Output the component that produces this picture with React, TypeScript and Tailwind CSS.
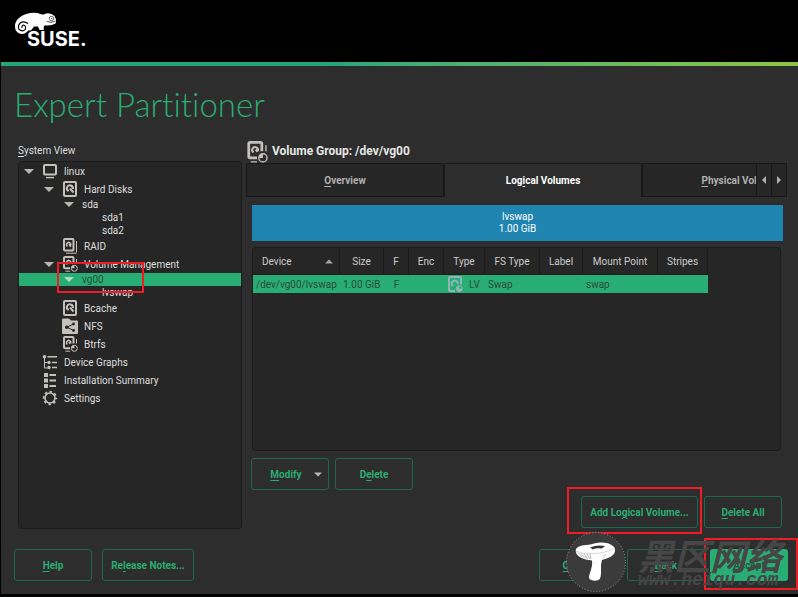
import type { ReactNode } from "react";

type IconProps = { className?: string };

function DiskIcon({ className = "size-4" }: IconProps) {
  return (
    <svg viewBox="0 0 16 16" className={className} fill="none" stroke="currentColor">
      <rect x="2" y="1" width="12" height="14" rx="1" strokeWidth="2" />
      <path d="M6.6 10A3 3 0 1 1 10.800 8" strokeWidth="2" />
      <path d="M8 7.500l3.500 4" strokeWidth="2" />
    </svg>
  );
}

function RaidIcon({ className = "size-4" }: IconProps) {
  return (
    <svg viewBox="0 0 16 16" className={className} fill="none" stroke="currentColor">
      <rect x="2" y="1" width="9.500" height="11.500" rx="1" strokeWidth="2" />
      <path d="M5.500 8.300A2.100 2.100 0 1 1 8.600 7.300M7 6.200l1.800 2.600" strokeWidth="1.500" />
      <path d="M14.500 3v11.500M4 15.200h10.500" strokeWidth="1" />
    </svg>
  );
}

function VolumeIcon({ className = "size-4" }: IconProps) {
  return (
    <svg viewBox="0 0 16 16" className={className} fill="none" stroke="currentColor">
      <path d="M8 12.200H3a1 1 0 0 1-1-1V2a1 1 0 0 1 1-1h7.500a1 1 0 0 1 1 1v5.500" strokeWidth="2" />
      <path d="M5.500 8.300A2.100 2.100 0 1 1 8.600 7.300M7 6.200l1.400 1.600" strokeWidth="1.500" />
      <path d="M14.500 3v4.500M3.500 15.200h4.500" strokeWidth="1" />
      <circle cx="12.300" cy="12.300" r="3" strokeWidth="1" />
      <path d="M12.300 12.300V9.300a3 3 0 0 0-3 3z" fill="currentColor" stroke="none" />
    </svg>
  );
}

function LogicalVolumeIcon() {
  return (
    <svg viewBox="0 0 16 16" className="size-4 text-[#8fb5b8]" fill="none" stroke="currentColor">
      <path d="M8 15H3a1 1 0 0 1-1-1V2a1 1 0 0 1 1-1h10a1 1 0 0 1 1 1v6.500" strokeWidth="2" />
      <path d="M6 10A3 3 0 1 1 10.800 8" strokeWidth="2" />
      <circle cx="12.300" cy="12.500" r="3" strokeWidth="1" />
      <path d="M12.300 12.500v-3a3 3 0 1 0 3 3z" fill="currentColor" stroke="none" />
    </svg>
  );
}

function ComputerIcon() {
  return (
    <svg viewBox="0 0 16 16" className="size-4" fill="none" stroke="currentColor" strokeWidth="2">
      <rect x="2" y="2" width="12" height="9.500" rx="1" />
      <path d="M4 14.600h8" strokeWidth="1.400" />
    </svg>
  );
}

function ShareIcon() {
  return (
    <svg viewBox="0 0 16 16" className="size-4">
      <path d="M0 1.500Q0 .5 1 .5h6l2 2h6q1 0 1 1V15q0 1-1 1H1q-1 0-1-1z" fill="currentColor" />
      <path d="M11.500 6L5 9.200l6.500 3.300" stroke="#262626" fill="none" />
      <g fill="#262626">
        <circle cx="11.500" cy="6" r="1.400" />
        <circle cx="4.800" cy="9.200" r="1.800" />
        <circle cx="11.500" cy="12.500" r="1.400" />
      </g>
    </svg>
  );
}

function GraphIcon() {
  return (
    <svg viewBox="0 0 16 16" className="size-4" fill="none" stroke="currentColor">
      <path d="M5.500 2.800H15M10 8.500h5M10 13.500h5" strokeWidth="1.400" />
      <path d="M2.500 3v11h3M2.500 8.500h3" strokeWidth="1" />
      <g fill="currentColor" stroke="none">
        <circle cx="2.500" cy="2.800" r="1.800" />
        <circle cx="7" cy="8.500" r="1.700" />
        <circle cx="7" cy="13.500" r="1.700" />
      </g>
    </svg>
  );
}

function SummaryIcon() {
  return (
    <svg viewBox="0 0 16 16" className="size-4" fill="currentColor">
      <path d="M2 1h4v4H2zM2 6.500h4v4H2zM2 12h4v4H2zM7.500 2H14v2H7.500zM7.500 7.500H14v2H7.500zM7.500 13H14v2H7.500z" />
    </svg>
  );
}

function GearIcon() {
  return (
    <svg viewBox="0 0 16 16" className="size-4" fill="none" stroke="currentColor">
      <circle cx="8" cy="8" r="5" strokeWidth="1.600" />
      <circle cx="8" cy="8" r="6.200" strokeWidth="2" strokeDasharray="2.400 2.470" strokeDashoffset="1.200" />
    </svg>
  );
}

function Arrow({ className = "w-[10px]" }: IconProps) {
  return (
    <svg viewBox="0 0 10 5" className={`h-[5px] ${className}`}>
      <path d="M0 0h10L5 5z" fill="currentColor" />
    </svg>
  );
}

function SuseLogo() {
  return (
    <svg viewBox="0 0 76 38" className="h-[38px] w-[76px]" role="img" aria-label="SUSE">
      <g fill="#fff">
        <path d="M0 14C0 8 6 3 12 1.700Q20-.2 26 2.200Q29 2.800 31 1.400Q36 .4 39.500 4Q42 8.500 40.500 11.500Q36 14 30 13.200Q28 14.500 29 18H24.500L23 14.500H19L16 18.500H12L14 15L11 12z" />
        <circle cx="7" cy="15" r="7" />
      </g>
      <path d="M13 11.500Q9 8.500 5.200 11Q2.200 14 4.200 17.500Q7.500 20.200 10.300 17.300Q11.300 13.500 8.300 13Q6.200 14 7.200 16" fill="none" stroke="#000" strokeWidth="1.100" />
      <circle cx="36.500" cy="6.500" r="2.200" fill="none" stroke="#000" strokeWidth=".6" />
      <circle cx="36.800" cy="6.500" r=".6" />
      <path d="M32 9.500Q36 11.500 40.500 9" stroke="#000" strokeWidth=".7" fill="none" />
      <text x="12" y="34" fill="#fff" stroke="#000" strokeWidth="2" paintOrder="stroke" fontFamily="Inter, sans-serif" fontSize="20" fontWeight="700">
        SUSE.
      </text>
    </svg>
  );
}

const treeIndent = ["pl-[5px]", "pl-[25px]", "pl-[45px]", "pl-[65px]"];

type Node = { label: string; depth: number; icon?: ReactNode; open?: boolean; selected?: boolean };

const tree: Node[] = [
  { label: "linux", depth: 0, icon: <ComputerIcon />, open: true },
  { label: "Hard Disks", depth: 1, icon: <DiskIcon />, open: true },
  { label: "sda", depth: 2, open: true },
  { label: "sda1", depth: 3 },
  { label: "sda2", depth: 3 },
  { label: "RAID", depth: 1, icon: <RaidIcon /> },
  { label: "Volume Management", depth: 1, icon: <VolumeIcon />, open: true },
  { label: "vg00", depth: 2, open: true, selected: true },
  { label: "lvswap", depth: 3 },
  { label: "Bcache", depth: 1, icon: <DiskIcon /> },
  { label: "NFS", depth: 1, icon: <ShareIcon /> },
  { label: "Btrfs", depth: 1, icon: <VolumeIcon /> },
  { label: "Device Graphs", depth: 0, icon: <GraphIcon /> },
  { label: "Installation Summary", depth: 0, icon: <SummaryIcon /> },
  { label: "Settings", depth: 0, icon: <GearIcon /> },
];

function TreeRow({ node }: { node: Node }) {
  return (
    <li
      role="treeitem"
      aria-level={node.depth + 1}
      aria-selected={!!node.selected}
      className={`relative flex items-center ${treeIndent[node.depth]} ${node.icon ? "h-[18px]" : "h-[13px]"} ${
        node.selected ? "bg-[#28ae74] text-[#2b4a3c]" : "text-[#dedede]"
      }`}
    >
      <span className={`mr-2 w-[10px] ${node.selected ? "text-[#a9dcc4]" : "text-[#b8b6b0]"}`}>{node.open && <Arrow />}</span>
      {node.icon && <span className="mr-1.5 text-[#c4c1bb]">{node.icon}</span>}
      <span className="leading-[13px] whitespace-nowrap">{node.label}</span>
      {node.selected && <span className="absolute -top-[11px] left-[38px] z-10 h-[31px] w-[87px] border-2 border-[#ee1c24]" />}
    </li>
  );
}

function Button({ children, className = "min-w-[78px]" }: { children: ReactNode; className?: string }) {
  return (
    <button
      type="button"
      className={`flex h-8 items-center justify-center rounded-[3px] border border-[#1a694c] font-bold whitespace-nowrap text-[#2aac74] ${className}`}
    >
      {children}
    </button>
  );
}

function Key({ children }: { children: string }) {
  return <u className="underline-offset-2">{children}</u>;
}

const columns = [
  { label: "Device", width: "w-[87px]", value: "/dev/vg00/lvswap" },
  { label: "Size", width: "w-[44px]", value: "1.00 GiB" },
  { label: "F", width: "w-[25px]", value: "F" },
  { label: "Enc", width: "w-[35px]", value: "" },
  { label: "Type", width: "w-[41px]", value: "LV" },
  { label: "FS Type", width: "w-[55px]", value: "Swap" },
  { label: "Label", width: "w-[43px]", value: "" },
  { label: "Mount Point", width: "w-[75px]", value: "swap" },
  { label: "Stripes", width: "w-[50px]", value: "" },
];

function VolumeTable() {
  return (
    <div className="mr-0.5 ml-px min-h-[120px] flex-1 overflow-hidden rounded-[4px] border border-[#1b1b1b] bg-[#262626]">
      <table className="w-[455px] table-fixed border-separate border-spacing-0">
        <thead>
          <tr className="h-[27px]">
            {columns.map((col) => (
              <th key={col.label} className={`${col.width} border-r border-b border-[#1a1a1a] p-0 font-normal text-[#cccccc]`}>
                {col.label === "Device" ? (
                  <span className="flex items-center justify-between pr-1.5 pl-[9px]">
                    {col.label}
                    <Arrow className="w-2 rotate-180 text-[#a5a5a5]" />
                  </span>
                ) : (
                  col.label
                )}
              </th>
            ))}
          </tr>
        </thead>
        <tbody>
          <tr className="h-[18px] bg-[#28ae74] text-[#2b4a3c]">
            {columns.map((col) => (
              <td key={col.label} className={`p-0 whitespace-nowrap ${col.label === "F" ? "text-center" : "pl-[3px]"}`}>
                {col.label === "Type" ? (
                  <span className="flex items-center gap-1.5">
                    <LogicalVolumeIcon />
                    {col.value}
                  </span>
                ) : (
                  col.value
                )}
              </td>
            ))}
          </tr>
        </tbody>
      </table>
    </div>
  );
}

function Tabs() {
  const idle = "border-y border-[#181818] bg-[#262626] text-[#b0b0b0]";
  return (
    <div className="flex h-[34px] font-bold" role="tablist">
      <button type="button" role="tab" aria-selected="false" className={`w-[198px] shrink-0 rounded-t-[2px] border-x ${idle}`}>
        <Key>O</Key>verview
      </button>
      <button type="button" role="tab" aria-selected="true" className="w-[198px] shrink-0 rounded-t-[2px] border-x border-t border-[#181818] text-white">
        Log<Key>i</Key>cal Volumes
      </button>
      <div className="min-w-0 flex-1 overflow-hidden">
        <button type="button" role="tab" aria-selected="false" className={`h-full w-[198px] rounded-t-[2px] border-l ${idle}`}>
          <Key>P</Key>hysical Volumes
        </button>
      </div>
      <button type="button" aria-label="Scroll left" className={`flex w-[15px] items-center justify-center border-l ${idle}`}>
        <svg viewBox="0 0 4 8" className="h-2 w-1">
          <path d="M4 0v8L0 4z" fill="currentColor" />
        </svg>
      </button>
      <button type="button" aria-label="Scroll right" className={`flex w-4 items-center justify-center border-x ${idle}`}>
        <svg viewBox="0 0 4 8" className="h-2 w-1">
          <path d="M0 0v8l4-4z" fill="currentColor" />
        </svg>
      </button>
    </div>
  );
}

function Watermark() {
  return (
    <div className="pointer-events-none absolute -top-[17px] right-0 z-20 flex gap-3 text-[#464646]">
      <svg viewBox="0 0 60 60" className="size-[60px]">
        <circle cx="30" cy="30" r="29.500" fill="#3b3b3b" stroke="#999" strokeWidth="1" strokeDasharray="1 2" />
        <path d="M10 17C13 12 21 14 28 11.500C38 8.500 48 12 49 17C50 24 42 26 36 28C34 34 36 42 34 46.500C32 50 24 49 23 46C23 41 27 36 26 28.500C18 28 8 24 10 17z" fill="#fff" />
        <path d="M24 15.500Q31 12.500 39 14L36 16.500Q30 15.500 27 17.500z" fill="#333" />
        <path d="M10 19Q15 22 24 21.500Q38 22 49 16" fill="none" stroke="#bbb" strokeWidth=".6" />
        <path d="M12 20.500l5 5M15 21.500l5 5M18 22l4 5M21 22l3 5M24 22l1 5M40 22l-3 4" fill="none" stroke="#888" strokeWidth=".6" />
      </svg>
      <div className="w-[150px] whitespace-nowrap italic">
        <div className="mt-[5px] font-['Noto_Sans_CJK_SC',sans-serif] text-[36px] leading-[34px] font-bold">黑区网络</div>
        <div className="font-['Liberation_Mono',monospace] text-[18px] leading-[18px] font-bold">www.heiqu.com</div>
      </div>
    </div>
  );
}

export default function App() {
  return (
    <div className="flex min-h-screen flex-col bg-black pb-[3px] pl-px font-[Roboto,sans-serif] text-[10px] leading-[13px]">
      <header className="flex h-[62px] shrink-0 items-start pt-3 pl-[14px]">
        <SuseLogo />
      </header>
      <div className="h-1 shrink-0 bg-linear-to-r from-[#20a57c] from-40% to-[#8cc63f]" />
      <main className="flex flex-1 flex-col bg-[#2d2d2d] pt-[18px] pr-[10px] pb-[13px] pl-[13px]">
        <h1 className="font-[Lato,sans-serif] text-[33px] leading-10 font-light text-[#2aac74] [font-variant-ligatures:none]">Expert Partitioner</h1>
        <div className="mt-4 flex flex-1 gap-1 pl-1">
          <section className="flex w-56 shrink-0 flex-col">
            <h2 id="system-view" className="flex h-[21px] items-center text-[#dedede]">
              <span>
                <Key>S</Key>ystem View
              </span>
            </h2>
            <ul role="tree" aria-labelledby="system-view" className="flex-1 rounded-[4px] border border-[#1b1b1b] bg-[#262626]">
              {tree.map((node) => (
                <TreeRow key={node.label} node={node} />
              ))}
            </ul>
          </section>
          <section className="flex min-w-0 flex-1 flex-col pr-px pb-px">
            <h2 className="flex h-[23px] items-center gap-1 text-[12px] font-bold text-[#e6e6e6]">
              <VolumeIcon className="size-[22px] text-[#c4c1bb]" />
              Volume Group: /dev/vg00
            </h2>
            <Tabs />
            <div className="flex flex-1 flex-col pt-2 pr-1 pl-[5px]">
              <div className="ml-px flex h-9 flex-col items-center justify-center bg-[#1f84b0] leading-3 text-white">
                <span>lvswap</span>
                <span>1.00 GiB</span>
              </div>
              <div className="flex flex-1 flex-col pt-1.5">
                <VolumeTable />
                <div className="mt-[7px] flex gap-1.5">
                  <Button className="w-[78px] gap-3 pl-3">
                    <span>
                      <Key>M</Key>odify
                    </span>
                    <Arrow className="w-2 text-[#b8b6b0]" />
                  </Button>
                  <Button>
                    <span>
                      D<Key>e</Key>lete
                    </span>
                  </Button>
                </div>
                <div className="mt-1.5 flex justify-end gap-1.5 pr-px">
                  <div className="relative">
                    <Button className="w-[117px]">
                      <span>
                        Add Lo<Key>g</Key>ical Volume...
                      </span>
                    </Button>
                    <span className="pointer-events-none absolute -top-[9px] -right-1 -bottom-1.5 -left-[14px] border-2 border-[#ee1c24]" />
                  </div>
                  <Button>
                    <span>
                      <Key>D</Key>elete All
                    </span>
                  </Button>
                </div>
              </div>
            </div>
          </section>
        </div>
        <footer className="relative mt-5 flex">
          <Button>
            <span>
              <Key>H</Key>elp
            </span>
          </Button>
          <Button className="ml-[10px] w-[92px]">
            <span>
              Re<Key>l</Key>ease Notes...
            </span>
          </Button>
          <Button className="ml-auto w-[78px]">
            <span>
              <Key>C</Key>ancel
            </span>
          </Button>
          <Button className="ml-[10px] w-[78px]">
            <span>
              <Key>B</Key>ack
            </span>
          </Button>
          <div className="relative ml-[5px]">
            <button type="button" className="h-8 w-[78px] rounded-[3px] bg-[#28ae74] font-bold text-[#25543f]">
              <Key>A</Key>ccept
            </button>
            <span className="pointer-events-none absolute -top-[11px] -right-[10px] -bottom-[9px] -left-[6px] border-2 border-[#ee1c24]" />
          </div>
          <Watermark />
        </footer>
      </main>
    </div>
  );
}
